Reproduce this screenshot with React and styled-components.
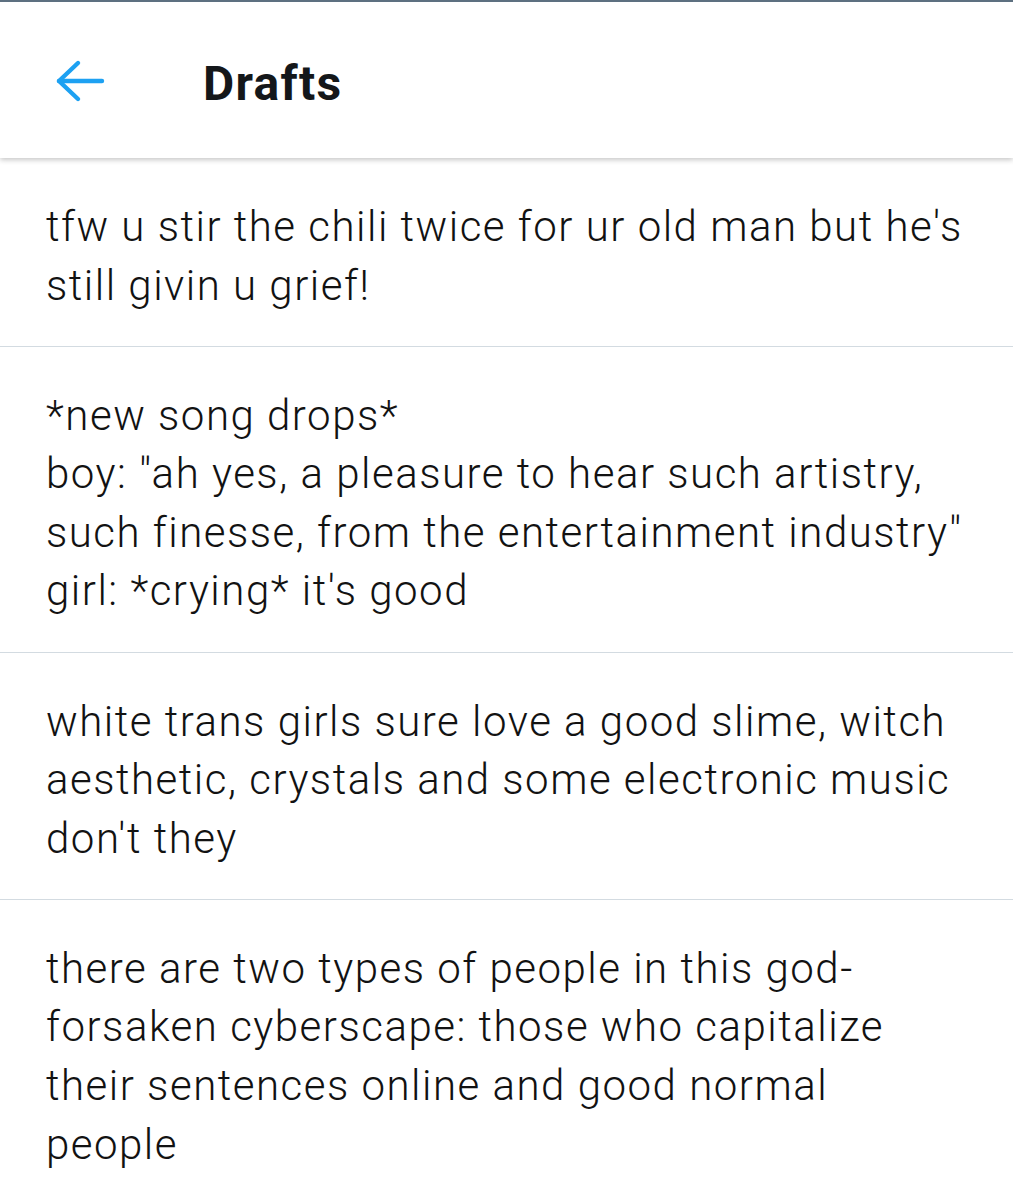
import React from "react";
import styled, { createGlobalStyle } from "styled-components";

const Global = createGlobalStyle`
  html, body { margin: 0; padding: 0; background: #ffffff; }
  body { font-family: Roboto, "Noto Sans", "Liberation Sans", sans-serif; }
`;

const Page = styled.div`
  width: 1013px;
  min-height: 1200px;
  background: #ffffff;
  border-top: 2px solid #5d7080;
  box-sizing: border-box;
  overflow: hidden;
`;

const Header = styled.header`
  position: relative;
  z-index: 1;
  height: 156px;
  display: flex;
  align-items: center;
  padding-left: 55px;
  background: #ffffff;
  box-shadow: 0 2px 5px rgba(0, 0, 0, 0.22);
`;

const BackButton = styled.button`
  border: 0;
  background: none;
  padding: 0;
  margin: 0 98px 0 0;
  display: flex;
  align-items: center;
  color: #1da1f2;
  cursor: pointer;
  position: relative;
  top: 1px;
`;

const Title = styled.h1`
  margin: 0;
  font-size: 48px;
  font-weight: 700;
  color: #14171a;
  letter-spacing: 1.3px;
  position: relative;
  top: 3px;
`;

const List = styled.ul`
  list-style: none;
  margin: 0;
  padding: 0;
`;

const Draft = styled.li`
  padding: 40px 40px 30.5px 46px;
  font-size: 42px;
  font-weight: 300;
  line-height: 58.6px;
  letter-spacing: 1.5px;
  color: #121212;
  border-bottom: 1px solid #d3dbe1;
  white-space: nowrap;
`;

const drafts = [
  ["tfw u stir the chili twice for ur old man but he's", "still givin u grief!"],
  [
    "*new song drops*",
    "boy: \"ah yes, a pleasure to hear such artistry,",
    "such finesse, from the entertainment industry\"",
    "girl: *crying* it's good",
  ],
  [
    "white trans girls sure love a good slime, witch",
    "aesthetic, crystals and some electronic music",
    "don't they",
  ],
  [
    "there are two types of people in this god-",
    "forsaken cyberscape: those who capitalize",
    "their sentences online and good normal",
    "people",
  ],
];

export default function App() {
  return (
    <>
      <Global />
      <Page>
        <Header>
          <BackButton aria-label="Back">
            <svg width="50" height="44" viewBox="0 0 50 44" fill="none" stroke="currentColor" strokeWidth="4.4" strokeLinecap="round" strokeLinejoin="round">
              <path d="M4 22H47" />
              <path d="M23 4L4 22L23 40" />
            </svg>
          </BackButton>
          <Title>Drafts</Title>
        </Header>
        <List>
          {drafts.map((lines, i) => (
            <Draft key={i}>
              {lines.map((l, j) => (
                <React.Fragment key={j}>
                  {l}
                  {j < lines.length - 1 && <br />}
                </React.Fragment>
              ))}
            </Draft>
          ))}
        </List>
      </Page>
    </>
  );
}
